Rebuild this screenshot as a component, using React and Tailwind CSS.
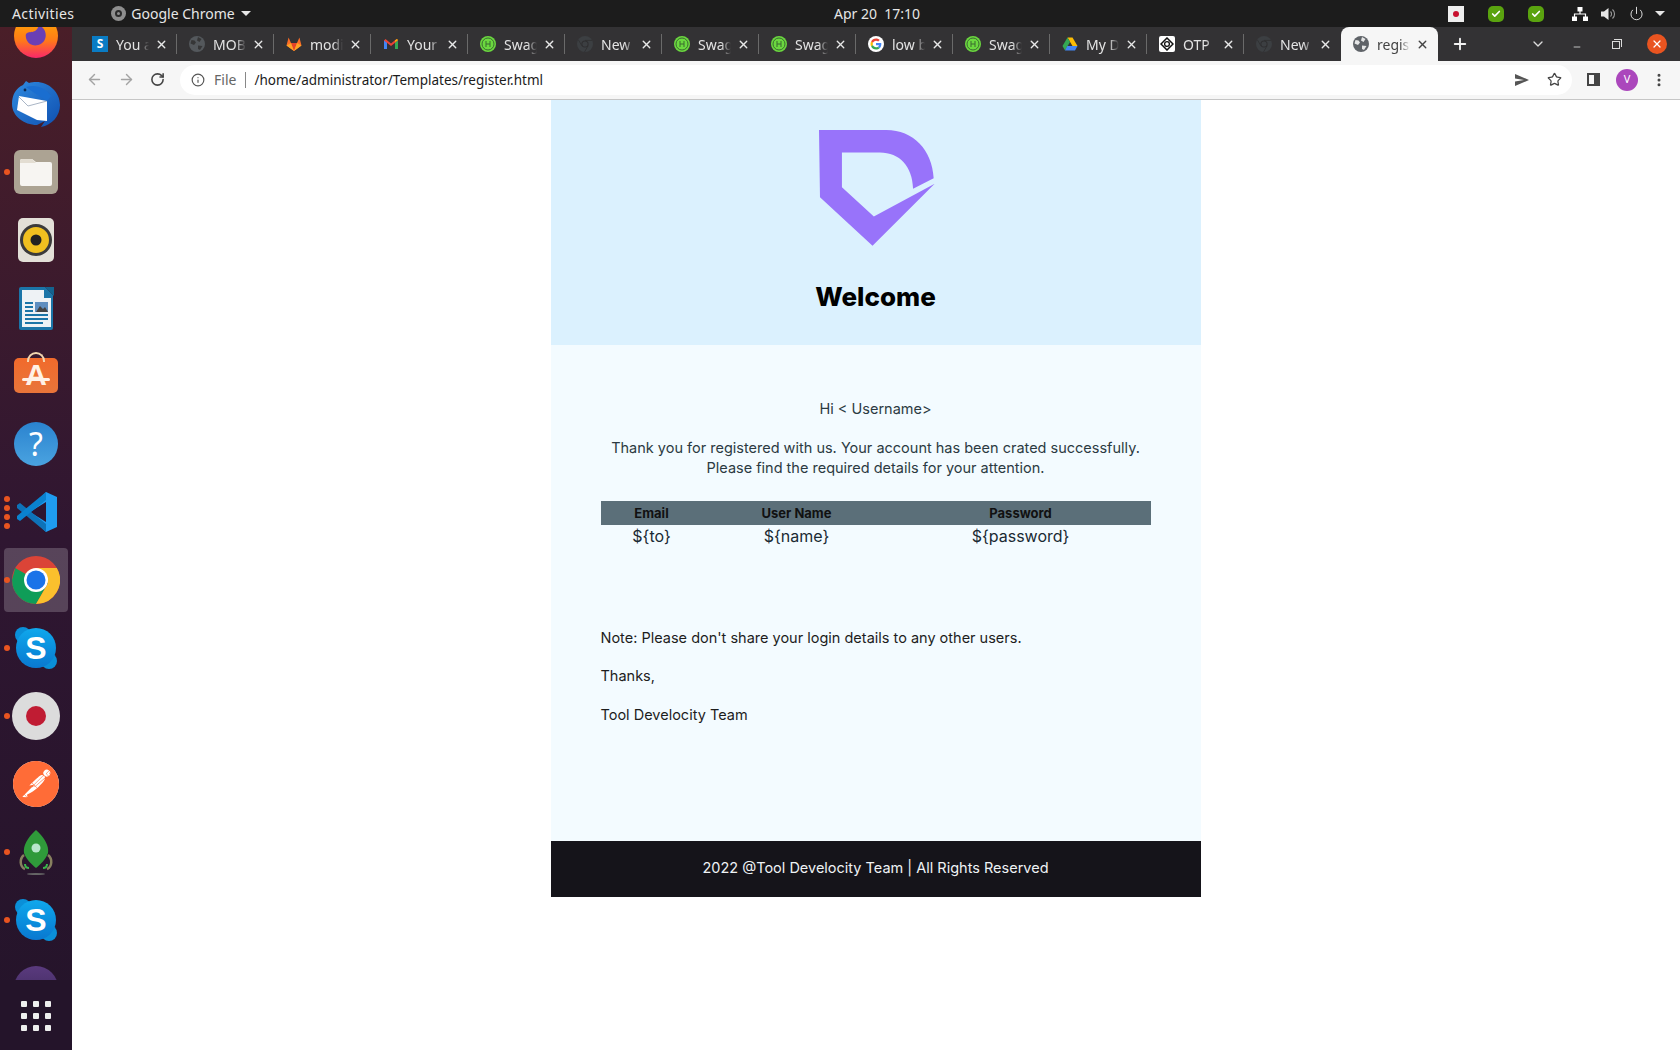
import React from "react";
import { X, Plus, ChevronDown, ArrowLeft, ArrowRight, RotateCw, Info, Star, Minus, EllipsisVertical, Power, Check } from "lucide-react";
import { SiPostman } from "react-icons/si";

const Swagger = () => (
  <svg width="16" height="16" viewBox="0 0 16 16"><circle cx="8" cy="8" r="8" fill="#6bd83f"/><circle cx="8" cy="8" r="6" fill="none" stroke="#3a6b30" strokeWidth="1"/><path d="M6 5v6M10 5v6M6 8h4" stroke="#3a6b30" strokeWidth="1" fill="none"/></svg>
);
const GlobeFav = ({ c = "#5f6368", light = "#f5f5f5" }) => (
  <svg width="16" height="16" viewBox="0 0 16 16"><circle cx="8" cy="8" r="8" fill={c}/><path d="M2.500 4l3 .5 1.500 2-2 2.500-3.500-1.500zM9 1l3.500 2-2 3-2.500-1.500zM9 9.500l4.500.5-2.500 4-2-1z" fill={light} opacity=".9"/></svg>
);
const ChromeFav = () => (
  <svg width="16" height="16" viewBox="0 0 16 16"><circle cx="8" cy="8" r="8" fill="#3c3f42"/><circle cx="8" cy="8" r="3.600" fill="#2e2e30"/><circle cx="8" cy="8" r="2.600" fill="#3c3f42"/><path d="M8 4.400h7M4.900 9.800L1.500 4M11.100 9.800L7.500 16" stroke="#2e2e30" strokeWidth=".8"/></svg>
);
const Sfav = () => (
  <div className="w-4 h-4 bg-[#0a7cc4] flex items-center justify-center text-white text-[12px] font-bold leading-none">S</div>
);
const GitlabFav = () => (
  <svg width="16" height="16" viewBox="0 0 16 16"><path d="M8 15L.5 9.500 2.600 1.500 5 7h6l2.400-5.500 2.100 8z" fill="#fc6d26"/><path d="M8 15L5 7h6z" fill="#e24329"/><path d="M8 15L.5 9.500 5 7zM8 15l7.500-5.500L11 7z" fill="#fca326"/></svg>
);
const GmailFav = () => (
  <svg width="16" height="16" viewBox="0 0 16 16"><path d="M1 13V4l3 2v7z" fill="#4285f4"/><path d="M15 13V4l-3 2v7z" fill="#34a853"/><path d="M1 4.500L2.500 3 8 7.500 13.500 3 15 4.500 8 10z" fill="#ea4335"/><path d="M12 6l3-2-1-1-2 1.500z" fill="#fbbc04"/></svg>
);
const GoogleFav = () => (
  <svg width="16" height="16" viewBox="0 0 48 48"><circle cx="24" cy="24" r="24" fill="#fff"/><g transform="translate(7.500 7.500) scale(.69)"><path fill="#EA4335" d="M24 9.500c3.500 0 6.700 1.200 9.200 3.600l6.900-6.900C35.900 2.400 30.500 0 24 0 14.600 0 6.500 5.400 2.600 13.200l8 6.200C12.500 13.600 17.800 9.500 24 9.500z"/><path fill="#4285F4" d="M47 24.500c0-1.600-.1-3.100-.4-4.500H24v9h12.900c-.6 3-2.200 5.500-4.700 7.200l7.700 6C44.400 37.600 47 31.600 47 24.500z"/><path fill="#FBBC05" d="M10.600 28.600c-.5-1.400-.8-3-.8-4.600s.3-3.200.8-4.600l-8-6.200C.9 16.500 0 20.100 0 24s.9 7.500 2.600 10.800z"/><path fill="#34A853" d="M24 48c6.500 0 11.900-2.100 15.900-5.800l-7.700-6c-2.200 1.400-5 2.300-8.200 2.300-6.200 0-11.500-4.200-13.400-9.800l-8 6.200C6.500 42.600 14.600 48 24 48z"/></g></svg>
);
const DriveFav = () => (
  <svg width="16" height="16" viewBox="0 0 16 16"><path d="M5.500 1.500h5L15.500 10h-5z" fill="#fbbc04"/><path d="M5.500 1.500L.5 10 3 14.500 8 6z" fill="#34a853"/><path d="M5.300 10h10.200L13 14.500H3z" fill="#4285f4"/></svg>
);
const OtpFav = () => (
  <div className="w-4 h-4 bg-white rounded-[2px] flex items-center justify-center">
    <svg width="14" height="14" viewBox="0 0 14 14"><path d="M7 1l6 6-6 6-6-6z" fill="none" stroke="#111" strokeWidth="1.500"/><circle cx="7" cy="7" r="2.400" fill="none" stroke="#111" strokeWidth="1.300"/></svg>
  </div>
);

const tabs = [
  ["You a", <Sfav />], ["MOB", <GlobeFav c="#54585c" light="#333" />], ["modi", <GitlabFav />], ["Your", <GmailFav />],
  ["Swag", <Swagger />], ["New", <ChromeFav />], ["Swag", <Swagger />], ["Swag", <Swagger />],
  ["low b", <GoogleFav />], ["Swag", <Swagger />], ["My D", <DriveFav />], ["OTP", <OtpFav />], ["New", <ChromeFav />],
];

const Tab = ({ title, icon, last }) => (
  <div className="relative w-[97px] h-full flex items-center pl-3 shrink-0">
    <div className="w-4 h-4 shrink-0">{icon}</div>
    <div className="ml-2 w-[33px] overflow-hidden whitespace-nowrap text-[14px] text-[#e3e3e3] [mask-image:linear-gradient(90deg,#000_70%,transparent)]">{title}</div>
    <X size={13} strokeWidth={2.500} className="text-[#e8e8e8] ml-[6px] shrink-0" />
    {!last && <div className="absolute right-0 top-[7px] w-px h-5 bg-[#6a6a6a]" />}
  </div>
);

const Dock = ({ children, dots = 0, active }) => (
  <div className="relative h-[68px] shrink-0 flex items-center justify-center">
    {active && <div className="absolute left-1 top-[2px] w-16 h-16 rounded-[4px] bg-white/20" />}
    {dots > 0 && (
      <div className="absolute left-1 top-0 h-full flex flex-col justify-center gap-[3px]">
        {Array.from({ length: dots }).map((_, i) => <div key={i} className="w-[6px] h-[6px] rounded-full bg-[#e95420]" />)}
      </div>
    )}
    <div className="relative">{children}</div>
  </div>
);

const Chrome = ({ s = 48 }) => (
  <svg width={s} height={s} viewBox="0 0 48 48">
    <circle cx="24" cy="24" r="24" fill="#db4437"/>
    <path d="M24 24L3.200 12 .0 24a24 24 0 0 0 24 24l12-20.800z" fill="#0f9d58"/>
    <path d="M24 12h20.800A24 24 0 0 1 24 48l12-20.800z" fill="#fbc02d"/>
    <circle cx="24" cy="24" r="12" fill="#fff"/><circle cx="24" cy="24" r="9.500" fill="#1a73e8"/>
  </svg>
);
const Skype = () => (
  <div className="relative w-[42px] h-[42px]">
    <div className="absolute left-0 top-0 w-4 h-4 rounded-full bg-[#0a8fd8]" />
    <div className="absolute right-0 bottom-0 w-4 h-4 rounded-full bg-[#0a8fd8]" />
    <div className="absolute inset-[1px] rounded-full bg-gradient-to-b from-[#10a8ec] to-[#0a78d0] flex items-center justify-center text-white text-[32px] font-bold leading-none font-['Liberation_Sans',sans-serif]">S</div>
  </div>
);

export default function App() {
  const sans = "font-['Noto_Sans',sans-serif]";
  const page = "font-['Inter',sans-serif]";
  return (
    <div className={`w-[1680px] h-[1050px] overflow-hidden flex flex-col bg-white ${sans}`}>
      {/* GNOME top bar */}
      <div className="h-[27px] shrink-0 bg-[#1c1c1c] flex items-center text-[#e6e6e6] text-[14px] relative">
        <div className="w-[834px] flex items-center">
          <span className="ml-3 tracking-[0.4px]">Activities</span>
          <div className="ml-[37px] w-[15px] h-[15px] rounded-full bg-[#8e8e8e] flex items-center justify-center"><div className="w-[7px] h-[7px] rounded-full border-2 border-[#2a2a2a]" /></div>
          <span className="ml-[5px]">Google Chrome</span>
          <div className="ml-[6px] border-x-[5px] border-x-transparent border-t-[5px] border-t-[#e6e6e6]" />
        </div>
        <span>Apr 20&nbsp;&nbsp;17:10</span>
        <div className="ml-[528px] w-4 h-4 bg-[#eeeeee] flex items-center justify-center shrink-0"><div className="w-[6px] h-[6px] rounded-full bg-[#c8102e]" /></div>
        <div className="ml-[24px] w-4 h-4 rounded-[5px] bg-[#5aa30f] flex items-center justify-center shrink-0"><Check size={10} strokeWidth={4} className="text-white" /></div>
        <div className="ml-[24px] w-4 h-4 rounded-[5px] bg-[#5aa30f] flex items-center justify-center shrink-0"><Check size={10} strokeWidth={4} className="text-white" /></div>
        <svg width="16" height="14" viewBox="0 0 16 14" className="ml-[28px] shrink-0"><path d="M5.500 0h5v4.500h-5zM0 9.500h5V14H0zM11 9.500h5V14h-5z" fill="#fff"/><path d="M8 4v3M2.500 10V7h11v3" fill="none" stroke="#fff" strokeWidth="1.200"/></svg>
        <svg width="15" height="14" viewBox="0 0 15 14" className="ml-[13px] shrink-0"><path d="M0 4.500h3L7.500 1v12L3 9.500H0z" fill="#e6e6e6"/><path d="M9.500 4.500a3.500 3.500 0 0 1 0 5M11.500 2.500a6 6 0 0 1 0 9" fill="none" stroke="#9a9a9a" strokeWidth="1.100"/></svg>
        <Power size={15} strokeWidth={1.500} className="ml-[13px] shrink-0 text-[#e6e6e6]" />
        <div className="ml-[11px] shrink-0 border-x-[5px] border-x-transparent border-t-[5px] border-t-[#e6e6e6]" />
      </div>

      <div className="flex-1 flex min-h-0">
        {/* Dock */}
        <div className="w-[72px] shrink-0 flex flex-col bg-gradient-to-b from-[#4a1e28] via-[#2f1631] to-[#24142a]">
          <div className="h-[953px] overflow-hidden shrink-0">
            <div className="-mt-[25px] flex flex-col">
              <Dock>
                <svg width="44" height="44" viewBox="0 0 44 44"><defs><linearGradient id="ff" x1="0" y1="0" x2="0" y2="1"><stop offset="0" stopColor="#ffb000"/><stop offset=".6" stopColor="#ff7a18"/><stop offset="1" stopColor="#f9276a"/></linearGradient></defs><circle cx="22" cy="22" r="22" fill="url(#ff)"/><path d="M12 20c3-3 5-1 9-3 3-2 3-4 4-6 6 3 8 9 6 14-2 6-10 8-15 5-3-2-5-6-4-10z" fill="#6a3fb5"/></svg>
              </Dock>
              <Dock>
                <svg width="48" height="48" viewBox="0 0 48 48"><defs><linearGradient id="tb" x1="0" y1="0" x2="1" y2="1"><stop offset="0" stopColor="#2f8be0"/><stop offset="1" stopColor="#0f4fb0"/></linearGradient></defs><path d="M24 2c13 0 24 10 24 23 0 11-8 20-19 22l4-6-8 4C12 45 0 36 0 24 0 15 4 8 11 5l3-4 3 2c2-1 5-1 7-1z" fill="url(#tb)"/><path d="M7 16l28 5 0 20-10-1L5 30z" fill="#fff"/><path d="M7 17l9 9 19-5" fill="none" stroke="#aab6c6" strokeWidth="1"/><path d="M14 7c9-3 19 0 25 9l-4 5-14-9z" fill="#1a6ed0"/><circle cx="13" cy="10" r="1.400" fill="#0c2a55"/></svg>
              </Dock>
              <Dock dots={1}>
                <div className="w-11 h-11 rounded-[6px] bg-[#aca393] flex items-center justify-center">
                  <svg width="32" height="28" viewBox="0 0 32 28"><path d="M0 3a2 2 0 0 1 2-2h10l4 3h14a2 2 0 0 1 2 2v20a2 2 0 0 1-2 2H2a2 2 0 0 1-2-2z" fill="#f7f5f2"/><path d="M0 3a2 2 0 0 1 2-2h10l4 4H0z" fill="#e3ddd2"/></svg>
                </div>
              </Dock>
              <Dock>
                <div className="w-9 h-11 rounded-[5px] bg-[#e3e0d8] flex items-center justify-center">
                  <svg width="32" height="32" viewBox="0 0 32 32"><circle cx="16" cy="16" r="16" fill="#3b3b3b"/><circle cx="16" cy="16" r="13" fill="#f0c020"/><circle cx="16" cy="16" r="5.500" fill="#222"/></svg>
                </div>
              </Dock>
              <Dock>
                <svg width="36" height="45" viewBox="0 0 36 45"><path d="M3 1h24l8 8v33a2 2 0 0 1-2 2H3a2 2 0 0 1-2-2V3a2 2 0 0 1 2-2z" fill="#1b75a8"/><path d="M4 4h22v8h7v29H4z" fill="#eef2f5"/><path d="M27 1l9 9V1z" fill="#14638f"/><path d="M7 17h8M7 21h8M7 25h8M7 29h23M7 33h23M7 37h18" stroke="#1b75a8" strokeWidth="2"/><rect x="17" y="16" width="13" height="10" fill="#5e8ec0"/><path d="M18 26l4-6 3 3 2-2 3 5z" fill="#444"/></svg>
              </Dock>
              <Dock>
                <div className="relative w-11 h-[35px] mb-[2px] rounded-[5px] bg-gradient-to-b from-[#f16a2b] to-[#e8753a] flex items-center justify-center overflow-visible">
                  <div className="absolute -top-[6px] left-[13px] w-[18px] h-[10px] rounded-t-full border-2 border-b-0 border-[#f3d7b0]" />
                  <span className="text-[#fff1e6] text-[30px] font-bold leading-none font-['Liberation_Sans',sans-serif]">A</span>
                  <div className="absolute left-2 right-2 top-[20px] h-[3px] rounded-full bg-[#fff1e6]" />
                </div>
              </Dock>
              <Dock>
                <div className="w-11 h-11 rounded-full bg-gradient-to-b from-[#2a83cf] to-[#4aa3e0] flex items-center justify-center text-white text-[32px] leading-none">?</div>
              </Dock>
              <Dock dots={4}>
                <svg width="42" height="42" viewBox="0 0 42 42" className="ml-[1px]"><path d="M30 1l11 5v30l-11 5L10 22z" fill="#1f9cf0"/><path d="M30 11v20L14 21z" fill="#2e1530"/><path d="M1 14l3-2 26 21v8L1 17z" fill="#0e72b8"/><path d="M1 28l3 2L30 9V1L1 25z" fill="#0a82cf"/></svg>
              </Dock>
              <Dock dots={1} active><Chrome /></Dock>
              <Dock dots={1}><Skype /></Dock>
              <Dock dots={1}>
                <div className="w-12 h-12 rounded-full bg-[#dcdcdc] flex items-center justify-center"><div className="w-5 h-5 rounded-full bg-[#c01c33]" /></div>
              </Dock>
              <Dock>
                <div className="w-[46px] h-[46px] rounded-full bg-white flex items-center justify-center"><SiPostman size={46} className="text-[#ff6c37]" /></div>
              </Dock>
              <Dock dots={1}>
                <svg width="34" height="46" viewBox="0 0 34 46"><path d="M5 26c-5 4-4 12 1 14M29 26c5 4 4 12-1 14" fill="none" stroke="#87805f" strokeWidth="2.500"/><path d="M17 1C26 9 30 17 29 24c-2 6-7 11-12 15C12 35 7 30 5 24 4 17 8 9 17 1z" fill="#2f9a3a"/><circle cx="17" cy="19" r="4.500" fill="#b7e6cb"/><path d="M6 35c0 3 2 4 4 4M28 35c0 3-2 4-4 4" fill="none" stroke="#39b54a" strokeWidth="2"/><ellipse cx="17" cy="45" rx="9" ry="1" fill="#666"/></svg>
              </Dock>
              <Dock dots={1}><Skype /></Dock>
              <Dock>
                <div className="w-11 h-11 rounded-full bg-gradient-to-b from-[#5a3a7e] to-[#3a2758]" />
              </Dock>
            </div>
          </div>
          <div className="flex-1 bg-[#24142a] flex items-center justify-center pt-[2px]">
            <div className="grid grid-cols-3 gap-[6px]">
              {Array.from({ length: 9 }).map((_, i) => <div key={i} className="w-[6px] h-[6px] rounded-[1px] bg-[#efefef]" />)}
            </div>
          </div>
        </div>

        <div className="flex-1 flex flex-col min-w-0">
          {/* Tab strip */}
          <div className="h-[34px] shrink-0 bg-[#333234] flex items-stretch pl-2">
            {tabs.map(([t, ic], i) => <Tab key={i} title={t} icon={ic} last={i === 12} />)}
            <div className="w-[97px] h-full rounded-t-[8px] bg-[#f6f6f6] flex items-center pl-3 shrink-0">
              <GlobeFav c="#5f6368" />
              <div className="ml-2 w-[33px] overflow-hidden whitespace-nowrap text-[14px] text-[#444] [mask-image:linear-gradient(90deg,#000_70%,transparent)]">register</div>
              <X size={13} strokeWidth={2.500} className="text-[#444] ml-[6px] shrink-0" />
            </div>
            <Plus size={18} strokeWidth={2.500} className="ml-[13px] self-center text-[#f2f2f2] shrink-0" />
            <ChevronDown size={16} strokeWidth={2} className="ml-[61px] self-center text-[#dcdcdc] shrink-0" />
            <Minus size={10} strokeWidth={2} className="ml-[26px] mt-[5px] self-center text-[#dcdcdc] shrink-0" />
            <div className="relative ml-[30px] mt-[2px] self-center w-2 h-2 border border-[#dcdcdc] shrink-0">
              <div className="absolute -top-[3px] -right-[3px] w-2 h-2 border-t border-r border-[#dcdcdc]" />
            </div>
            <div className="ml-[27px] self-center w-5 h-5 rounded-full bg-[#e95420] flex items-center justify-center shrink-0"><X size={12} strokeWidth={2.500} className="text-white" /></div>
          </div>

          {/* Toolbar */}
          <div className="h-[39px] shrink-0 bg-[#f6f6f6] border-b border-[#c6c6c6] flex items-center pb-px">
            <ArrowLeft size={17} strokeWidth={2} className="ml-[14px] text-[#a3a3a3] shrink-0" />
            <ArrowRight size={17} strokeWidth={2} className="ml-[15px] text-[#a3a3a3] shrink-0" />
            <RotateCw size={15} strokeWidth={2.500} className="ml-[15px] text-[#444] shrink-0" />
            <div className="ml-[15px] w-[1392px] h-[30px] rounded-full bg-white flex items-center shrink-0">
              <Info size={14} strokeWidth={2} className="ml-[11px] text-[#555] shrink-0" />
              <span className="ml-[9px] text-[14px] text-[#666]">File</span>
              <div className="ml-[9px] w-px h-4 bg-[#888]" />
              <span className="ml-[8px] mt-[2px] text-[13.5px] text-[#1b1b1b]">/home/administrator/Templates/register.html</span>
              <svg width="14" height="12" viewBox="0 0 14 12" className="ml-auto mr-[7px]"><path d="M0 0l14 6-14 6 0-4.500L9 6 0 4.500z" fill="#555"/></svg>
              <Star size={15} strokeWidth={2} className="ml-[11px] mr-[10px] text-[#444] shrink-0" />
            </div>
            <div className="ml-[15px] w-[13px] h-[13px] border-2 border-[#444] border-r-[6px] shrink-0" />
            <div className="ml-[16px] w-[22px] h-[22px] rounded-full bg-[#ab47bc] flex items-center justify-center text-white text-[11px] shrink-0">V</div>
            <EllipsisVertical size={16} strokeWidth={2.500} className="ml-[13px] text-[#444] shrink-0" />
          </div>

          {/* Page */}
          <div className={`flex-1 flex justify-center items-start ${page}`}>
            <div className="w-[650px] ml-[-1px]">
              <div className="h-[245px] bg-[#dbf1fe] flex flex-col items-center pt-[30px]">
                <svg width="116" height="116" viewBox="117 60 349 349" className="ml-[2px]">
                  <path d="M117 60H320C400 60 458 120 462 205L400 237C398 170 360 128 300 128H186V232L282 320L465 222L278 408L120 262Z" fill="#9873fa"/>
                </svg>
                <h1 className="mt-[35px] text-[26px] leading-[32px] font-extrabold text-black">Welcome</h1>
              </div>
              <div className="h-[496px] bg-[#f3fbff] px-[50px] pt-[54px] text-[14.5px] leading-[20px] text-[#2b3a42]">
                <p className="text-center">Hi &lt; Username&gt;</p>
                <p className="text-center mt-[19px]">Thank you for registered with us. Your account has been crated successfully.<br />Please find the required details for your attention.</p>
                <table className="mt-[23px] w-[550px] border-collapse table-fixed">
                  <thead>
                    <tr className="bg-[#5b6f79] h-6 text-[13px] font-bold text-[#111]">
                      <th className="w-[102px] font-bold">Email</th>
                      <th className="w-[188px] font-bold">User Name</th>
                      <th className="font-bold">Password</th>
                    </tr>
                  </thead>
                  <tbody>
                    <tr className="text-center text-[16px] h-[21px] text-[#1a2a33]">
                      <td>${"{to}"}</td><td>${"{name}"}</td><td>${"{password}"}</td>
                    </tr>
                  </tbody>
                </table>
                <div className="text-[#1d1d1d]">
                  <p className="mt-[82px]">Note: Please don't share your login details to any other users.</p>
                  <p className="mt-[18px]">Thanks,</p>
                  <p className="mt-[19px]">Tool Develocity Team</p>
                </div>
              </div>
              <div className="h-[56px] bg-[#15141a] flex items-center justify-center text-[14.5px] text-[#eef2f5] pb-[3px]">2022 @Tool Develocity Team | All Rights Reserved</div>
            </div>
          </div>
        </div>
      </div>
    </div>
  );
}
